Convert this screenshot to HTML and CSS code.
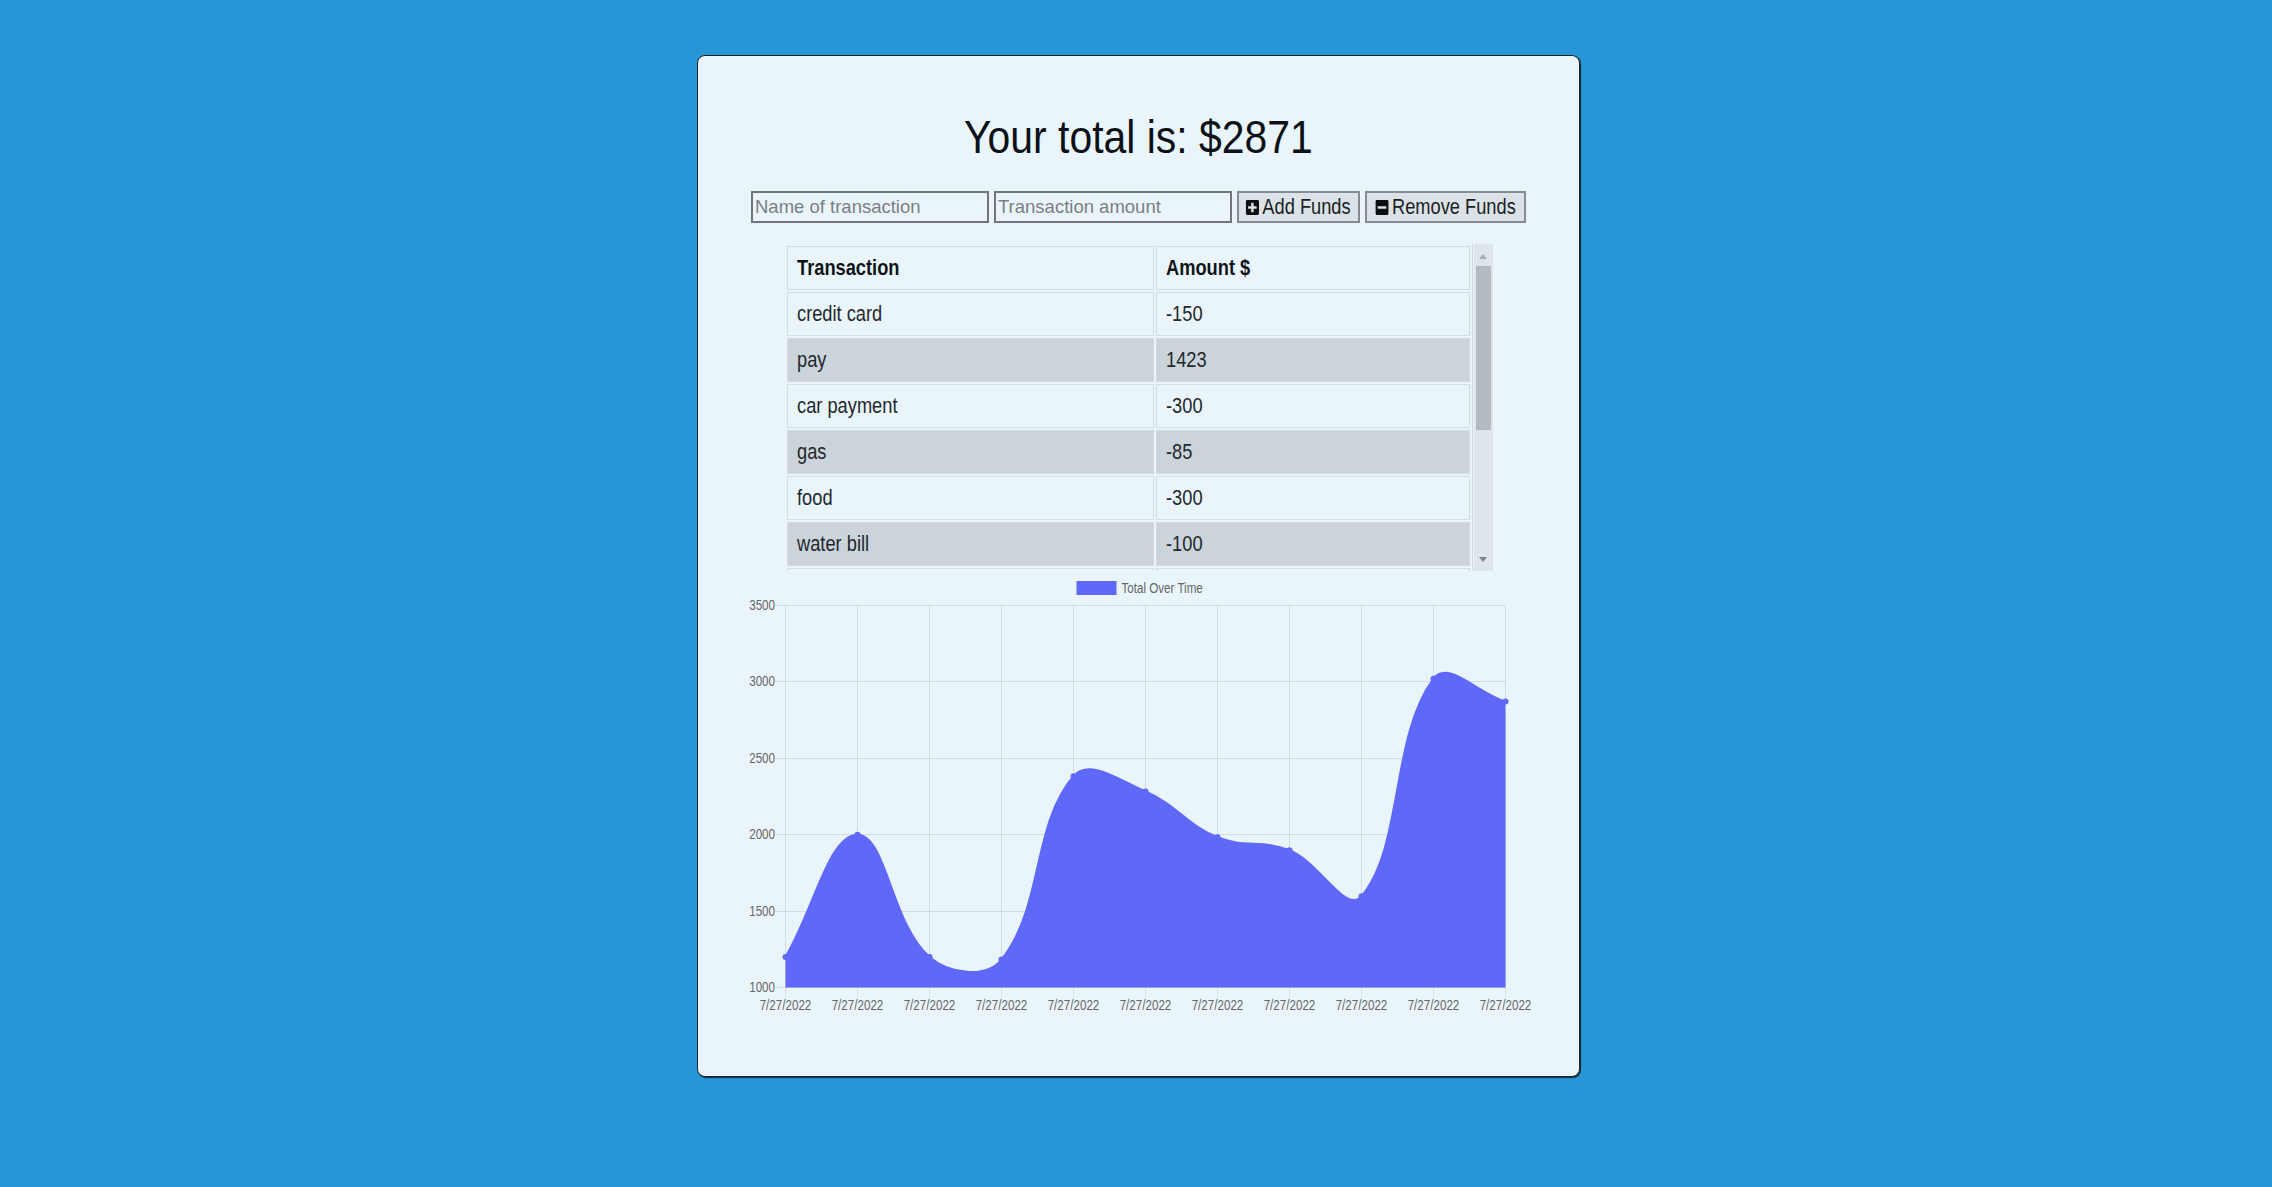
FILE: index.html
```html
<!DOCTYPE html>
<html lang="en">
<head>
<meta charset="utf-8">
<title>Budget Tracker</title>
<link rel="stylesheet" href="styles.css">
</head>
<body>
<main class="card">
  <h1 class="total"><span class="sq sq-c">Your total is: $<span id="total">2871</span></span></h1>

  <form class="entry">
    <input class="field" type="text" placeholder="Name of transaction">
    <input class="field" type="number" placeholder="Transaction amount">
    <button class="btn btn-add" type="button">
      <span class="btn-label sq sq-c"><svg class="btn-icon" viewBox="0 0 448 512" preserveAspectRatio="none"><path d="M400 32H48C21.5 32 0 53.5 0 80v352c0 26.5 21.5 48 48 48h352c26.5 0 48-21.5 48-48V80c0-26.5-21.5-48-48-48zm-32 252c0 6.6-5.4 12-12 12h-92v92c0 6.6-5.4 12-12 12h-56c-6.6 0-12-5.4-12-12v-92H92c-6.6 0-12-5.4-12-12v-56c0-6.6 5.4-12 12-12h92v-92c0-6.6 5.4-12 12-12h56c6.6 0 12 5.4 12 12v92h92c6.6 0 12 5.4 12 12v56z"/></svg>Add Funds</span>
    </button>
    <button class="btn btn-sub" type="button">
      <span class="btn-label sq sq-c"><svg class="btn-icon" viewBox="0 0 448 512" preserveAspectRatio="none"><path d="M400 32H48C21.5 32 0 53.5 0 80v352c0 26.5 21.5 48 48 48h352c26.5 0 48-21.5 48-48V80c0-26.5-21.5-48-48-48zM92 296c-6.6 0-12-5.4-12-12v-56c0-6.6 5.4-12 12-12h264c6.6 0 12 5.4 12 12v56c0 6.6-5.4 12-12 12H92z"/></svg>Remove Funds</span>
    </button>
  </form>

  <section class="table-wrap">
    <div class="table-view">
      <table class="ledger">
        <thead>
          <tr><th class="col-name"><span class="sq">Transaction</span></th><th><span class="sq">Amount $</span></th></tr>
        </thead>
        <tbody>
          <tr><td><span class="sq">credit card</span></td><td><span class="sq">-150</span></td></tr>
          <tr><td><span class="sq">pay</span></td><td><span class="sq">1423</span></td></tr>
          <tr><td><span class="sq">car payment</span></td><td><span class="sq">-300</span></td></tr>
          <tr><td><span class="sq">gas</span></td><td><span class="sq">-85</span></td></tr>
          <tr><td><span class="sq">food</span></td><td><span class="sq">-300</span></td></tr>
          <tr><td><span class="sq">water bill</span></td><td><span class="sq">-100</span></td></tr>
          <tr><td><span class="sq">paycheck</span></td><td><span class="sq">1200</span></td></tr>
          <tr><td><span class="sq">coffee</span></td><td><span class="sq">-17</span></td></tr>
          <tr><td><span class="sq">rent</span></td><td><span class="sq">-800</span></td></tr>
          <tr><td><span class="sq">bonus</span></td><td><span class="sq">800</span></td></tr>
          <tr><td><span class="sq">paycheck</span></td><td><span class="sq">1200</span></td></tr>
        </tbody>
      </table>
    </div>
    <div class="scrollbar">
      <span class="sb-arrow sb-up"></span>
      <span class="sb-track"><span class="sb-thumb"></span></span>
      <span class="sb-arrow sb-down"></span>
    </div>
  </section>

  <svg class="chart" width="790" height="450" viewBox="0 0 790 450">
    <rect class="legend-box" x="332.5" y="10" width="40" height="14"/>
    <text class="legend-text" x="377.5" y="22">Total Over Time</text>

    <g class="grid" id="grid"></g>

    <path id="area" class="area" d=""/>
    <path id="line" class="line" d=""/>
    <g id="points" class="points"></g>

    <g class="ylabels">
      <text x="31" y="39">3500</text>
      <text x="31" y="115.4">3000</text>
      <text x="31" y="191.8">2500</text>
      <text x="31" y="268.2">2000</text>
      <text x="31" y="344.6">1500</text>
      <text x="31" y="421">1000</text>
    </g>
    <g class="xlabels">
      <text x="41.5" y="439">7/27/2022</text>
      <text x="113.5" y="439">7/27/2022</text>
      <text x="185.5" y="439">7/27/2022</text>
      <text x="257.5" y="439">7/27/2022</text>
      <text x="329.5" y="439">7/27/2022</text>
      <text x="401.5" y="439">7/27/2022</text>
      <text x="473.5" y="439">7/27/2022</text>
      <text x="545.5" y="439">7/27/2022</text>
      <text x="617.5" y="439">7/27/2022</text>
      <text x="689.5" y="439">7/27/2022</text>
      <text x="761.5" y="439">7/27/2022</text>
    </g>
  </svg>
</main>
<script src="script.js"></script>
</body>
</html>
```

FILE: styles.css
```css
* { box-sizing: border-box; }

html, body { margin: 0; }

body {
  background: #2896d6;
  padding: 55px 0 0 5px;
  min-height: 100vh;
  font-family: "Liberation Sans", Arial, sans-serif;
  color: #111;
}

/* the reference renders its text horizontally condensed */
.sq {
  display: inline-block;
  white-space: nowrap;
  transform: scaleX(0.83);
  transform-origin: left center;
}
.sq-c { transform-origin: center center; }

.card {
  width: 883px;
  margin: 0 auto;
  background: #eaf5fb;
  border: 1px solid #1d2226;
  border-radius: 8px;
  box-shadow: 1px 1px 1px rgba(0, 0, 0, 0.7);
  padding: 53px 0 55px;
  display: flex;
  flex-direction: column;
  align-items: center;
}

.total {
  margin: 0;
  font-size: 47px;
  line-height: 56px;
  font-weight: normal;
  color: #0b1116;
  text-align: center;
}
.total .sq { transform: scaleX(0.87); }

.entry {
  margin-top: 26px;
  display: flex;
  gap: 5px;
  height: 32px;
}

.field {
  width: 238px;
  height: 32px;
  border: 2px solid #70767a;
  background: #eaf5fb;
  padding: 0 2px;
  font: inherit;
  font-size: 18.5px;
  color: #222;
  outline: none;
}
.field::placeholder { color: #7a7f83; }
.field::-webkit-outer-spin-button,
.field::-webkit-inner-spin-button { -webkit-appearance: none; margin: 0; }

.btn {
  height: 32px;
  border: 2px solid #858b8f;
  background: #dbe3e9;
  font: inherit;
  font-size: 22px;
  color: #1a1f23;
  display: flex;
  align-items: center;
  justify-content: center;
  padding: 0;
  overflow: visible;
}
.btn-add { width: 123px; }
.btn-sub { width: 161px; }

.btn-label {
  display: inline-flex;
  align-items: center;
  gap: 4px;
  flex: none;
}

.btn-icon {
  width: 16px;
  height: 17px;
  fill: #0b0f12;
  flex: none;
}

.table-wrap {
  margin-top: 21px;
  width: 708px;
  height: 327px;
  display: flex;
}

.table-view {
  flex: 1;
  overflow: hidden;
}

.ledger {
  width: 100%;
  border-collapse: separate;
  border-spacing: 2px;
  border: 1px solid #cfd8de;
  margin-top: -1px;
  margin-left: -1px;
  font-size: 22px;
  color: #23282c;
}

.ledger th, .ledger td {
  border: 1px solid #d4dde2;
  height: 44px;
  padding: 0 9px;
  text-align: left;
  line-height: 42px;
  white-space: nowrap;
}

.ledger th { font-weight: bold; color: #0f1418; }
.ledger .col-name { width: 54%; }

.ledger tbody tr:nth-child(even) td { background: #cad4da; }

.scrollbar {
  width: 19px;
  background: #dde6ec;
  display: flex;
  flex-direction: column;
  align-items: center;
}

.sb-arrow {
  width: 0;
  height: 0;
  border-left: 4px solid transparent;
  border-right: 4px solid transparent;
  flex: none;
}
.sb-up {
  margin-top: 10px;
  border-bottom: 5px solid #a4adb3;
}
.sb-down {
  margin-bottom: 9px;
  border-top: 5px solid #7d858a;
}

.sb-track {
  flex: 1;
  width: 100%;
  padding: 7px 2px 0;
}
.sb-thumb {
  display: block;
  width: 15px;
  height: 164px;
  background: #b2bbc0;
}

.chart {
  display: block;
  font-family: "Liberation Sans", Arial, sans-serif;
}

.chart text {
  transform-box: fill-box;
  transform: scaleX(0.83);
}

.legend-box { fill: #6068f8; }
.legend-text { fill: #666; font-size: 14px; transform-origin: left center; }

.grid line { stroke: rgba(0, 0, 0, 0.1); stroke-width: 1; }

.area { fill: #6068f8; }
.line { fill: none; stroke: #6068f8; stroke-width: 2; }
.points circle { fill: #6068f8; }

.ylabels text { fill: #666; font-size: 14px; text-anchor: end; transform-origin: right center; }
.xlabels text { fill: #666; font-size: 14px; text-anchor: middle; transform-origin: center center; }
```

FILE: script.js
```js
(function () {
  var vals = [1200, 2000, 1200, 1183, 2383, 2283, 1983, 1898, 1598, 3021, 2871];
  var L = 41.5, R = 761.5, T = 34.5, B = 416.5;
  var MIN = 1000, MAX = 3500;
  var ns = "http://www.w3.org/2000/svg";

  function X(i) { return L + i * (R - L) / (vals.length - 1); }
  function Y(v) { return B - (v - MIN) / (MAX - MIN) * (B - T); }

  var grid = document.getElementById("grid");
  function line(x1, y1, x2, y2) {
    var l = document.createElementNS(ns, "line");
    l.setAttribute("x1", x1); l.setAttribute("y1", y1);
    l.setAttribute("x2", x2); l.setAttribute("y2", y2);
    grid.appendChild(l);
  }
  for (var k = 0; k <= 5; k++) {
    var gy = Math.round(T + k * (B - T) / 5 - 0.5) + 0.5;
    line(L - 10, gy, R, gy);
  }
  for (var i = 0; i < vals.length; i++) {
    line(X(i), T, X(i), B + 10);
  }

  var pts = vals.map(function (v, i) { return { x: X(i), y: Y(v) }; });
  var t = 0.4;
  function cap(p) {
    p.x = Math.max(L, Math.min(R, p.x));
    p.y = Math.max(T, Math.min(B, p.y));
    return p;
  }
  pts.forEach(function (m, i) {
    var f = pts[i - 1] || m, a = pts[i + 1] || m;
    var d01 = Math.hypot(m.x - f.x, m.y - f.y);
    var d12 = Math.hypot(a.x - m.x, a.y - m.y);
    var s01 = d01 / (d01 + d12), s12 = d12 / (d01 + d12);
    if (isNaN(s01)) s01 = 0;
    if (isNaN(s12)) s12 = 0;
    var fa = t * s01, fb = t * s12;
    m.prev = cap({ x: m.x - fa * (a.x - f.x), y: m.y - fa * (a.y - f.y) });
    m.next = cap({ x: m.x + fb * (a.x - f.x), y: m.y + fb * (a.y - f.y) });
  });

  var d = "M" + pts[0].x + " " + pts[0].y;
  for (var j = 1; j < pts.length; j++) {
    var p = pts[j - 1], c = pts[j];
    d += " C" + p.next.x + " " + p.next.y + " " + c.prev.x + " " + c.prev.y + " " + c.x + " " + c.y;
  }
  document.getElementById("line").setAttribute("d", d);
  document.getElementById("area").setAttribute("d",
    d + " L" + pts[pts.length - 1].x + " " + B + " L" + pts[0].x + " " + B + " Z");

  var g = document.getElementById("points");
  pts.forEach(function (p) {
    var c = document.createElementNS(ns, "circle");
    c.setAttribute("cx", p.x); c.setAttribute("cy", p.y); c.setAttribute("r", 3);
    g.appendChild(c);
  });
})();
```
